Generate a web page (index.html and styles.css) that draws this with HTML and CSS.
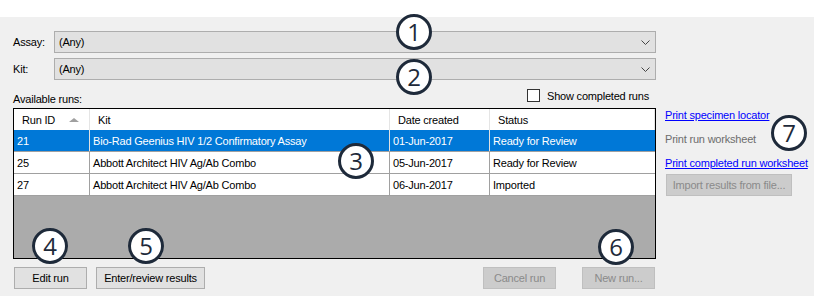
FILE: index.html
```html
<!DOCTYPE html>
<html lang="en">
<head>
    <meta charset="UTF-8">
    <title>Runs</title>
    <link rel="stylesheet" href="styles.css">
</head>
<body>
<div class="topband"></div>
<div class="form">
    <div class="left">
        <div class="field">
            <span class="lbl">Assay:</span>
            <div class="combo"><span>(Any)</span><svg width="9" height="5" viewBox="0 0 9 5"><path d="M0.5 0.5 L4.5 4.5 L8.5 0.5" fill="none" stroke="#444" stroke-width="1"/></svg></div>
        </div>
        <div class="field">
            <span class="lbl">Kit:</span>
            <div class="combo"><span>(Any)</span><svg width="9" height="5" viewBox="0 0 9 5"><path d="M0.5 0.5 L4.5 4.5 L8.5 0.5" fill="none" stroke="#444" stroke-width="1"/></svg></div>
        </div>
        <div class="runsbar">
            <span>Available runs:</span>
            <label class="check"><span class="box"></span>Show completed runs</label>
        </div>
        <div class="grid">
            <div class="row head">
                <div class="cell">Run ID<span class="sort"></span></div>
                <div class="cell">Kit</div>
                <div class="cell">Date created</div>
                <div class="cell">Status</div>
            </div>
            <div class="row sel">
                <div class="cell">21</div>
                <div class="cell">Bio-Rad Geenius HIV 1/2 Confirmatory Assay</div>
                <div class="cell">01-Jun-2017</div>
                <div class="cell">Ready for Review</div>
            </div>
            <div class="row">
                <div class="cell">25</div>
                <div class="cell">Abbott Architect HIV Ag/Ab Combo</div>
                <div class="cell">05-Jun-2017</div>
                <div class="cell">Ready for Review</div>
            </div>
            <div class="row">
                <div class="cell">27</div>
                <div class="cell">Abbott Architect HIV Ag/Ab Combo</div>
                <div class="cell">06-Jun-2017</div>
                <div class="cell">Imported</div>
            </div>
        </div>
        <div class="buttons">
            <button class="btn w72">Edit run</button>
            <button class="btn w108">Enter/review results</button>
            <span class="spacer"></span>
            <button class="btn w72 off">Cancel run</button>
            <button class="btn w72 off">New run...</button>
        </div>
    </div>
    <div class="right">
        <a class="link">Print specimen locator</a>
        <span class="link dim">Print run worksheet</span>
        <a class="link">Print completed run worksheet</a>
        <button class="btn w125 off">Import results from file...</button>
    </div>

    <div class="num n1">1</div>
    <div class="num n2">2</div>
    <div class="num n3">3</div>
    <div class="num n4">4</div>
    <div class="num n5">5</div>
    <div class="num n6">6</div>
    <div class="num n7">7</div>
</div>
</body>
</html>
```

FILE: styles.css
```css
body {
    margin: 0;
    background-color: #ffffff;
    font-family: "Liberation Sans", Arial, sans-serif;
    font-size: 11px;
    letter-spacing: -0.2px;
    color: #000000;
}

.topband {
    height: 17px;
}

.form {
    position: relative;
    height: 279px;
    background-color: #f0f0f0;
    display: flex;
    padding-left: 13px;
    box-sizing: border-box;
}

.left {
    flex: none;
    width: 643px;
    padding-top: 14px;
    display: flex;
    flex-direction: column;
}

.field {
    display: flex;
    align-items: center;
    height: 22px;
    margin-bottom: 5px;
}

.field .lbl {
    width: 41px;
}

.combo {
    flex: 1;
    height: 22px;
    box-sizing: border-box;
    border: 1px solid #adadad;
    background-color: #e1e1e1;
    display: flex;
    align-items: center;
    justify-content: space-between;
    padding: 0 5px 0 4px;
}

.runsbar {
    display: flex;
    justify-content: space-between;
    align-items: flex-end;
    height: 24px;
    padding-right: 7px;
    margin-top: -4px;
}

.runsbar .check {
    display: flex;
    align-items: center;
    margin-bottom: 3px;
}

.check .box {
    width: 11px;
    height: 11px;
    border: 1px solid #333333;
    background-color: #ffffff;
    margin-right: 7px;
}

.grid {
    margin-top: 3px;
    height: 151px;
    box-sizing: border-box;
    border: 1px solid #000000;
    background-color: #ababab;
}

.row {
    display: grid;
    grid-template-columns: 76px 300px 100px 1fr;
    height: 22px;
    background-color: #ffffff;
    box-sizing: border-box;
    border-bottom: 1px solid #a0a0a0;
}

.row .cell {
    display: flex;
    align-items: center;
    padding-left: 3px;
    border-right: 1px solid #a0a0a0;
    white-space: nowrap;
    overflow: hidden;
}

.row .cell:last-child {
    border-right: none;
}

.row.head {
    height: 21px;
    border-bottom: none;
}

.row.head .cell {
    padding-left: 8px;
    border-right: 1px solid #e5e5e5;
}

.row.head .cell:first-child {
    position: relative;
}

.sort {
    position: absolute;
    right: 10px;
    top: 9px;
    border-left: 5px solid transparent;
    border-right: 5px solid transparent;
    border-bottom: 4px solid #a0a0a0;
}

.row.sel {
    background-color: #0078d7;
    color: #ffffff;
}

.row.sel .cell {
    border-right-color: #e0e0e0;
}

.buttons {
    display: flex;
    margin-top: 8px;
    padding-left: 1px;
    gap: 9px;
}

.buttons .spacer {
    flex: 1;
}

.btn {
    height: 22px;
    box-sizing: border-box;
    border: 1px solid #adadad;
    background-color: #e1e1e1;
    font-family: inherit;
    font-size: 11px;
    letter-spacing: -0.2px;
    color: #000000;
    padding: 0;
    white-space: nowrap;
}

.btn.off {
    background-color: #cccccc;
    border-color: #bfbfbf;
    color: #8a8a8a;
}

.btn.w72 { width: 73px; }
.btn.w108 { width: 109px; }
.btn.w125 { width: 126px; }

.buttons .btn.off + .btn.off {
    margin-left: 17px;
    margin-right: 1px;
}

.right {
    padding-left: 9px;
    padding-top: 89px;
    display: flex;
    flex-direction: column;
    align-items: flex-start;
    white-space: nowrap;
}

.link {
    color: #0000ff;
    text-decoration: underline;
    height: 24px;
    line-height: 18px;
}

.link.dim {
    color: #6d6d6d;
    text-decoration: none;
}

.right .btn {
    margin-top: -4px;
    margin-left: 1px;
}

.num {
    position: absolute;
    width: 30px;
    height: 30px;
    border: 3px solid #1e2a3a;
    border-radius: 50%;
    background-color: #ffffff;
    color: #1e2a3a;
    font-family: "Open Sans", sans-serif;
    font-size: 24px;
    letter-spacing: 0;
    line-height: 30px;
    text-align: center;
}

.n1 { left: 396px; top: -3px; }
.n2 { left: 396px; top: 42px; }
.n3 { left: 338px; top: 126px; }
.n4 { left: 32px; top: 211px; }
.n5 { left: 128px; top: 211px; }
.n6 { left: 598px; top: 212px; }
.n7 { left: 771px; top: 98px; }
```
